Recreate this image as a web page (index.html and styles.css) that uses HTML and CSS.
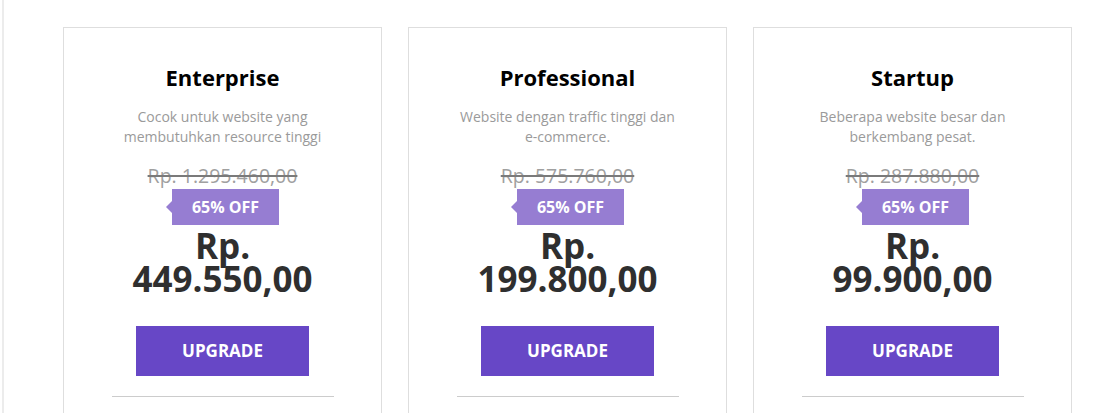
FILE: index.html
```html
<!DOCTYPE html>
<html lang="id">
<head>
<meta charset="utf-8">
<title>Paket Hosting</title>
<link rel="stylesheet" href="styles.css">
</head>
<body>
<div class="page">
  <div class="plans">
    <div class="card">
      <h3 class="title">Enterprise</h3>
      <p class="desc">Cocok untuk website yang membutuhkan resource tinggi</p>
      <div class="old">Rp. 1.295.460,00</div>
      <div class="badge">65% OFF</div>
      <div class="price">Rp. 449.550,00</div>
      <a class="btn" href="#">UPGRADE</a>
      <hr class="divider">
    </div>
    <div class="card">
      <h3 class="title">Professional</h3>
      <p class="desc">Website dengan traffic tinggi dan e-commerce.</p>
      <div class="old">Rp. 575.760,00</div>
      <div class="badge">65% OFF</div>
      <div class="price">Rp. 199.800,00</div>
      <a class="btn" href="#">UPGRADE</a>
      <hr class="divider">
    </div>
    <div class="card">
      <h3 class="title">Startup</h3>
      <p class="desc">Beberapa website besar dan berkembang pesat.</p>
      <div class="old">Rp. 287.880,00</div>
      <div class="badge">65% OFF</div>
      <div class="price">Rp. 99.900,00</div>
      <a class="btn" href="#">UPGRADE</a>
      <hr class="divider">
    </div>
  </div>
</div>
</body>
</html>
```
FILE: styles.css
```css
html, body {
  margin: 0;
  padding: 0;
  background: #fff;
  font-family: "Open Sans", "Liberation Sans", sans-serif;
}

.page {
  margin-left: 2px;
  border-left: 2px solid #ececec;
  height: 413px;
  overflow: hidden;
  padding-left: 59px;
  padding-top: 27px;
  box-sizing: border-box;
}

.plans {
  display: flex;
  gap: 26px;
}

.card {
  width: 319px;
  height: 386px;
  box-sizing: border-box;
  border: 1px solid #dedede;
  border-bottom: none;
  text-align: center;
  padding-top: 34px;
  display: flex;
  flex-direction: column;
  align-items: center;
}

.title {
  margin: 0;
  font-size: 22px;
  font-weight: 700;
  color: #000;
  line-height: 30px;
}

.desc {
  margin: 15px 0 0;
  width: 222px;
  font-size: 14px;
  line-height: 20px;
  color: #9a9a9a;
}

.old {
  margin-top: 15px;
  font-size: 19.5px;
  line-height: 27px;
  color: #a0a0a0;
  text-decoration: line-through;
  text-decoration-color: #7a7a7a;
  text-decoration-thickness: 2px;
}

.badge {
  position: relative;
  margin-left: 6px;
  width: 107px;
  height: 36px;
  line-height: 36px;
  background: #967dd2;
  color: #fff;
  font-size: 16px;
  font-weight: 700;
}

.badge::before {
  content: "";
  position: absolute;
  left: -6px;
  top: 12px;
  border-top: 6px solid transparent;
  border-bottom: 6px solid transparent;
  border-right: 6px solid #967dd2;
}

.price {
  margin-top: 4px;
  width: 222px;
  font-size: 35px;
  line-height: 33px;
  font-weight: 700;
  color: #2f2f2f;
}

.btn {
  margin-top: 31px;
  width: 173px;
  height: 50px;
  line-height: 50px;
  background: #6747c6;
  color: #fff;
  font-size: 17px;
  font-weight: 700;
  text-decoration: none;
}

.divider {
  margin: 20px 0 0;
  width: 222px;
  border: none;
  border-top: 1px solid #cccccc;
  height: 0;
}
```
